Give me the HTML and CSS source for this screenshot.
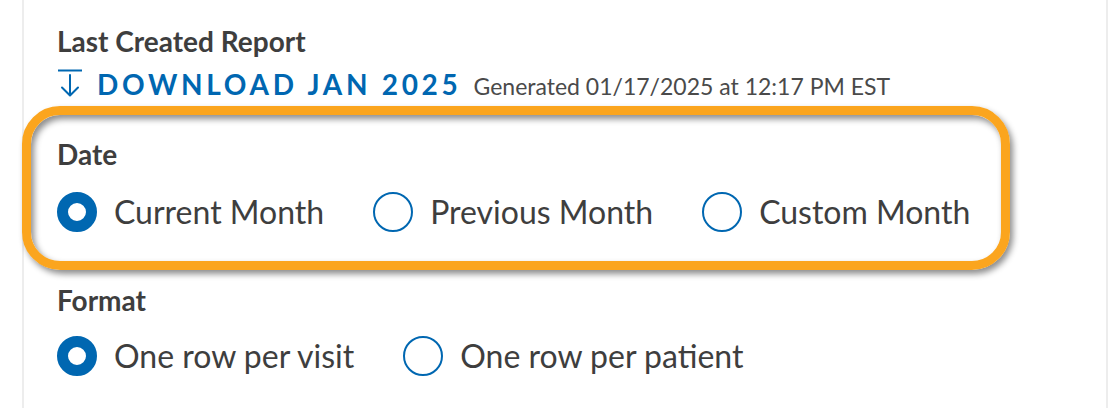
FILE: index.html
```html
<!DOCTYPE html>
<html lang="en">
<head>
<meta charset="utf-8">
<title>Report settings</title>
<link rel="stylesheet" href="styles.css">
</head>
<body>
<div class="panel">
  <section class="report">
    <h2 class="label">Last Created Report</h2>
    <div class="download-line">
      <a class="download" href="#">
        <svg class="dl-icon" width="26" height="28" viewBox="0 0 26 28" aria-hidden="true">
          <path d="M1 1.5H25" stroke="currentColor" stroke-width="2" fill="none"/>
          <path d="M13 6V26M5 18.5L13 26.5L21 18.5" stroke="currentColor" stroke-width="2" fill="none" stroke-linecap="round" stroke-linejoin="round"/>
        </svg>
        <span>DOWNLOAD JAN 2025</span>
      </a>
      <span class="generated">Generated 01/17/2025 at 12:17 PM EST</span>
    </div>
  </section>
  <section class="highlight">
    <h2 class="label">Date</h2>
    <div class="options date-options">
      <label class="option"><span class="radio checked"></span><span>Current Month</span></label>
      <label class="option"><span class="radio"></span><span>Previous Month</span></label>
      <label class="option"><span class="radio"></span><span>Custom Month</span></label>
    </div>
  </section>
  <section class="format">
    <h2 class="label">Format</h2>
    <div class="options format-options">
      <label class="option"><span class="radio checked"></span><span>One row per visit</span></label>
      <label class="option"><span class="radio"></span><span>One row per patient</span></label>
    </div>
  </section>
</div>
</body>
</html>
```
FILE: styles.css
```css
* { box-sizing: border-box; }
html, body { margin: 0; padding: 0; background: #fff; }
body {
  font-family: Lato, "Open Sans", "Liberation Sans", sans-serif;
  color: #3e3e3e;
  overflow: hidden;
}
.panel {
  margin-left: 22px;
  width: 1086px;
  height: 408px;
  border-left: 2px solid #ededed;
  border-right: 2px solid #ededed;
  padding-top: 24px;
}
.label {
  margin: 0;
  font-size: 28px;
  font-weight: 700;
  line-height: 34px;
  color: #3e3e3e;
}
.report { padding-left: 33px; }
.download-line {
  display: flex;
  align-items: baseline;
  margin-top: 8px;
  line-height: 36px;
}
.download {
  display: flex;
  align-items: baseline;
  color: #0067b1;
  text-decoration: none;
  font-weight: 700;
  font-size: 28px;
  letter-spacing: 3.7px;
  line-height: 36px;
}
.dl-icon { align-self: center; margin-right: 14px; position: relative; top: -1px; }
.generated {
  margin-left: 12px;
  font-size: 23px;
  color: #4a4a4a;
}
.highlight {
  margin-left: -2px;
  margin-top: 2px;
  width: 988px;
  border: 9px solid #fba51e;
  border-radius: 38px;
  box-shadow: 3px 4px 6px rgba(0, 0, 0, 0.45), inset 3px 4px 6px rgba(0, 0, 0, 0.45);
  padding: 22px 0 29px 26px;
}
.options {
  display: flex;
  align-items: center;
  gap: 49px;
}
.date-options { margin-top: 21px; }
.format-options { margin-top: 19px; }
.option {
  display: flex;
  align-items: center;
  gap: 17px;
  font-size: 32px;
  line-height: 40px;
}
.radio {
  width: 40px;
  height: 40px;
  border-radius: 50%;
  border: 2px solid #0067b1;
  flex: none;
}
.radio.checked { border-width: 11px; }
.format { padding-left: 33px; margin-top: 13px; }
```
